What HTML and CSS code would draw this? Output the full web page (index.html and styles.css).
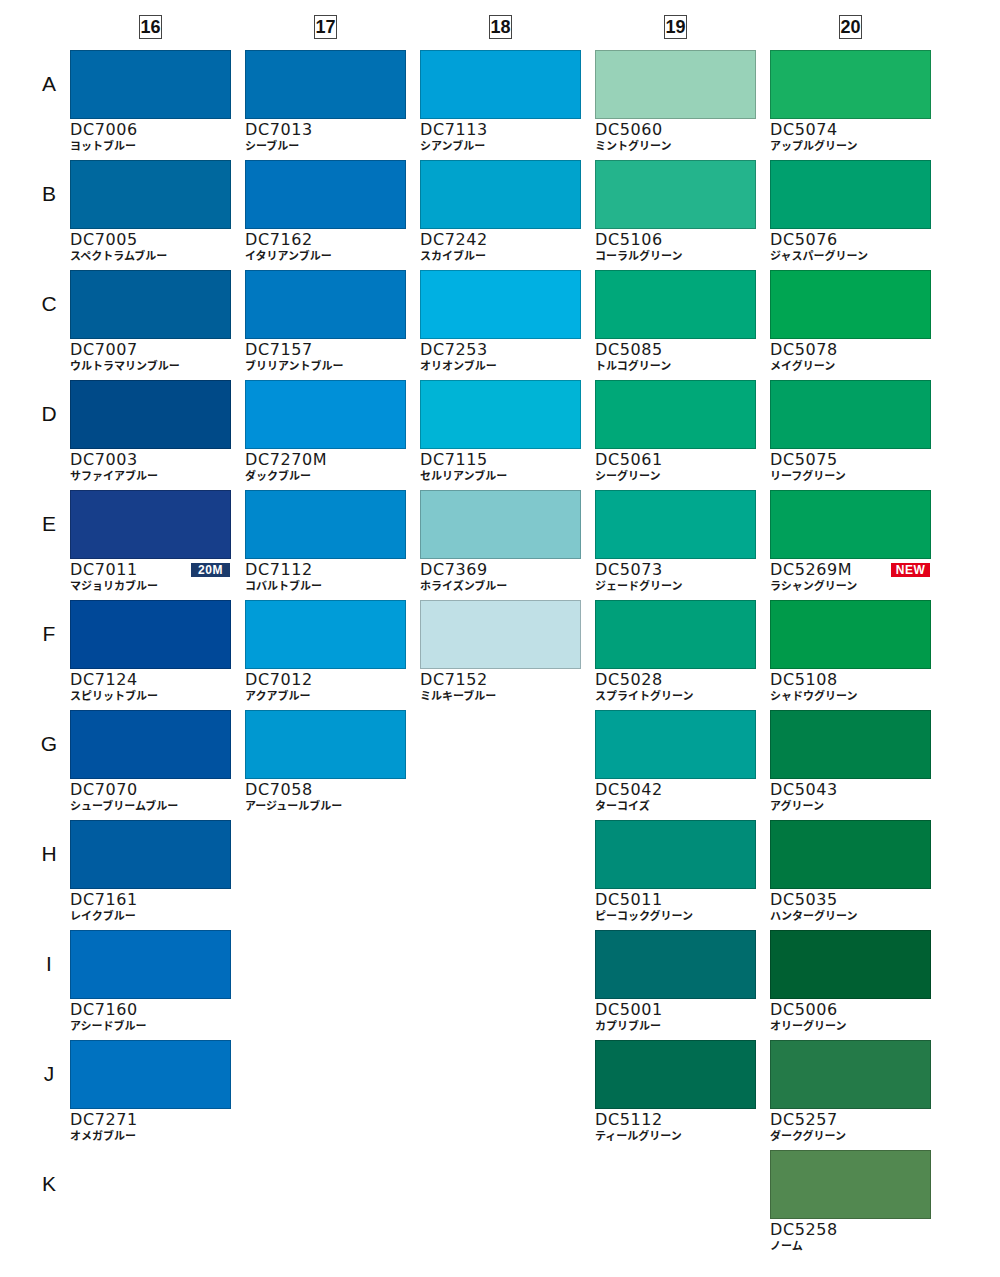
FILE: index.html
```html
<!DOCTYPE html>
<html lang="ja">
<head>
<meta charset="utf-8">
<title>Color chart</title>
<link rel="stylesheet" href="styles.css">
</head>
<body>
<div class="chart">
  <div class="corner"></div>
  <div class="col-head"><span class="num">16</span></div>
  <div class="col-head"><span class="num">17</span></div>
  <div class="col-head"><span class="num">18</span></div>
  <div class="col-head"><span class="num">19</span></div>
  <div class="col-head"><span class="num">20</span></div>

  <div class="row-head">A</div>
  <div class="cell"><div class="sw" style="background:#0068a8"></div><div class="code">DC7006</div><div class="name">ヨットブルー</div></div>
  <div class="cell"><div class="sw" style="background:#0070b2"></div><div class="code">DC7013</div><div class="name">シーブルー</div></div>
  <div class="cell"><div class="sw" style="background:#00a0d8"></div><div class="code">DC7113</div><div class="name">シアンブルー</div></div>
  <div class="cell"><div class="sw" style="background:#98d2b8"></div><div class="code">DC5060</div><div class="name">ミントグリーン</div></div>
  <div class="cell"><div class="sw" style="background:#18b062"></div><div class="code">DC5074</div><div class="name">アップルグリーン</div></div>

  <div class="row-head">B</div>
  <div class="cell"><div class="sw" style="background:#00689e"></div><div class="code">DC7005</div><div class="name">スペクトラムブルー</div></div>
  <div class="cell"><div class="sw" style="background:#0072bc"></div><div class="code">DC7162</div><div class="name">イタリアンブルー</div></div>
  <div class="cell"><div class="sw" style="background:#00a3cc"></div><div class="code">DC7242</div><div class="name">スカイブルー</div></div>
  <div class="cell"><div class="sw" style="background:#24b48c"></div><div class="code">DC5106</div><div class="name">コーラルグリーン</div></div>
  <div class="cell"><div class="sw" style="background:#00a06e"></div><div class="code">DC5076</div><div class="name">ジャスパーグリーン</div></div>

  <div class="row-head">C</div>
  <div class="cell"><div class="sw" style="background:#005e98"></div><div class="code">DC7007</div><div class="name">ウルトラマリンブルー</div></div>
  <div class="cell"><div class="sw" style="background:#0078c0"></div><div class="code">DC7157</div><div class="name">ブリリアントブルー</div></div>
  <div class="cell"><div class="sw" style="background:#00b0e2"></div><div class="code">DC7253</div><div class="name">オリオンブルー</div></div>
  <div class="cell"><div class="sw" style="background:#00a87a"></div><div class="code">DC5085</div><div class="name">トルコグリーン</div></div>
  <div class="cell"><div class="sw" style="background:#00a552"></div><div class="code">DC5078</div><div class="name">メイグリーン</div></div>

  <div class="row-head">D</div>
  <div class="cell"><div class="sw" style="background:#004a88"></div><div class="code">DC7003</div><div class="name">サファイアブルー</div></div>
  <div class="cell"><div class="sw" style="background:#0090d8"></div><div class="code">DC7270M</div><div class="name">ダックブルー</div></div>
  <div class="cell"><div class="sw" style="background:#00b4d6"></div><div class="code">DC7115</div><div class="name">セルリアンブルー</div></div>
  <div class="cell"><div class="sw" style="background:#00a878"></div><div class="code">DC5061</div><div class="name">シーグリーン</div></div>
  <div class="cell"><div class="sw" style="background:#00a062"></div><div class="code">DC5075</div><div class="name">リーフグリーン</div></div>

  <div class="row-head">E</div>
  <div class="cell"><div class="sw" style="background:#173e8a"></div><div class="code">DC7011<span class="badge navy">20M</span></div><div class="name">マジョリカブルー</div></div>
  <div class="cell"><div class="sw" style="background:#0088cc"></div><div class="code">DC7112</div><div class="name">コバルトブルー</div></div>
  <div class="cell"><div class="sw" style="background:#80c8cc"></div><div class="code">DC7369</div><div class="name">ホライズンブルー</div></div>
  <div class="cell"><div class="sw" style="background:#00a88e"></div><div class="code">DC5073</div><div class="name">ジェードグリーン</div></div>
  <div class="cell"><div class="sw" style="background:#00a05a"></div><div class="code">DC5269M<span class="badge red">NEW</span></div><div class="name">ラシャングリーン</div></div>

  <div class="row-head">F</div>
  <div class="cell"><div class="sw" style="background:#004898"></div><div class="code">DC7124</div><div class="name">スピリットブルー</div></div>
  <div class="cell"><div class="sw" style="background:#009cd8"></div><div class="code">DC7012</div><div class="name">アクアブルー</div></div>
  <div class="cell"><div class="sw" style="background:#c0e0e6"></div><div class="code">DC7152</div><div class="name">ミルキーブルー</div></div>
  <div class="cell"><div class="sw" style="background:#00a07a"></div><div class="code">DC5028</div><div class="name">スプライトグリーン</div></div>
  <div class="cell"><div class="sw" style="background:#009a4a"></div><div class="code">DC5108</div><div class="name">シャドウグリーン</div></div>

  <div class="row-head">G</div>
  <div class="cell"><div class="sw" style="background:#0052a0"></div><div class="code">DC7070</div><div class="name">シューブリームブルー</div></div>
  <div class="cell"><div class="sw" style="background:#0098d0"></div><div class="code">DC7058</div><div class="name">アージュールブルー</div></div>
  <div class="cell empty"></div>
  <div class="cell"><div class="sw" style="background:#00a096"></div><div class="code">DC5042</div><div class="name">ターコイズ</div></div>
  <div class="cell"><div class="sw" style="background:#008048"></div><div class="code">DC5043</div><div class="name">アグリーン</div></div>

  <div class="row-head">H</div>
  <div class="cell"><div class="sw" style="background:#005ca0"></div><div class="code">DC7161</div><div class="name">レイクブルー</div></div>
  <div class="cell empty"></div>
  <div class="cell empty"></div>
  <div class="cell"><div class="sw" style="background:#008c78"></div><div class="code">DC5011</div><div class="name">ピーコックグリーン</div></div>
  <div class="cell"><div class="sw" style="background:#007840"></div><div class="code">DC5035</div><div class="name">ハンターグリーン</div></div>

  <div class="row-head">I</div>
  <div class="cell"><div class="sw" style="background:#006cbc"></div><div class="code">DC7160</div><div class="name">アシードブルー</div></div>
  <div class="cell empty"></div>
  <div class="cell empty"></div>
  <div class="cell"><div class="sw" style="background:#006c6c"></div><div class="code">DC5001</div><div class="name">カプリブルー</div></div>
  <div class="cell"><div class="sw" style="background:#006032"></div><div class="code">DC5006</div><div class="name">オリーグリーン</div></div>

  <div class="row-head">J</div>
  <div class="cell"><div class="sw" style="background:#0072c0"></div><div class="code">DC7271</div><div class="name">オメガブルー</div></div>
  <div class="cell empty"></div>
  <div class="cell empty"></div>
  <div class="cell"><div class="sw" style="background:#006c50"></div><div class="code">DC5112</div><div class="name">ティールグリーン</div></div>
  <div class="cell"><div class="sw" style="background:#247a48"></div><div class="code">DC5257</div><div class="name">ダークグリーン</div></div>

  <div class="row-head">K</div>
  <div class="cell empty"></div>
  <div class="cell empty"></div>
  <div class="cell empty"></div>
  <div class="cell empty"></div>
  <div class="cell"><div class="sw" style="background:#528850"></div><div class="code">DC5258</div><div class="name">ノーム</div></div>
</div>
</body>
</html>
```
FILE: styles.css
```css
html, body {
  margin: 0;
  padding: 0;
  background: #ffffff;
}

.chart {
  display: grid;
  grid-template-columns: 56px repeat(5, 161px);
  grid-template-rows: 50px repeat(11, 110px);
  column-gap: 14px;
  color: #1a1a1a;
}

.col-head {
  display: flex;
  justify-content: center;
  align-items: flex-start;
  padding-top: 15px;
}

.num {
  box-sizing: border-box;
  width: 23px;
  height: 24px;
  border: 1px solid #444;
  font-family: "Liberation Sans", Arial, sans-serif;
  font-weight: bold;
  font-size: 18px;
  line-height: 22px;
  text-align: center;
  color: #111;
}

.row-head {
  box-sizing: border-box;
  height: 69px;
  display: flex;
  justify-content: center;
  align-items: center;
  padding-left: 42px;
  padding-bottom: 3px;
  font-family: "Liberation Sans", Arial, sans-serif;
  font-size: 21px;
  line-height: 21px;
  color: #111;
}

.cell {
  display: flex;
  flex-direction: column;
}

.sw {
  box-sizing: border-box;
  height: 69px;
  border: 1px solid rgba(0, 0, 0, 0.22);
}

.code {
  display: flex;
  justify-content: space-between;
  align-items: center;
  margin-top: 2px;
  font-family: "DejaVu Sans", "Liberation Sans", sans-serif;
  font-size: 16px;
  line-height: 18px;
  letter-spacing: 0.6px;
  color: #1a1a1a;
}

.badge {
  width: 39px;
  height: 14px;
  margin-right: 1px;
  margin-top: 0;
  font-family: "Liberation Sans", Arial, sans-serif;
  font-weight: bold;
  font-size: 12px;
  line-height: 14px;
  letter-spacing: 0.5px;
  text-align: center;
  color: #ffffff;
}

.badge.navy {
  background: #1b3a6b;
}

.badge.red {
  background: #e2001a;
}

.name {
  margin-top: -1px;
  font-family: "Noto Sans CJK JP", sans-serif;
  font-weight: bold;
  font-size: 11px;
  line-height: 14px;
  letter-spacing: 0;
  color: #1a1a1a;
}
```
